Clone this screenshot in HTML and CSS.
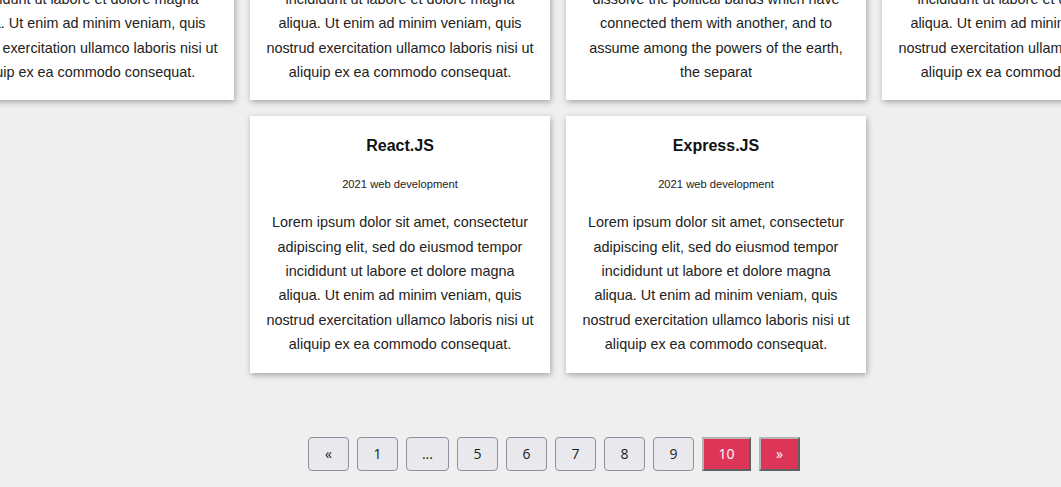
FILE: index.html
```html
<!DOCTYPE html>
<html lang="en">
<head>
<meta charset="utf-8">
<title>Projects</title>
<link rel="stylesheet" href="styles.css">
</head>
<body>
<main class="wrap">
  <section class="cards">
    <article class="card">
      <h3 class="card-title">HTML</h3>
      <p class="card-sub">2021 web development</p>
      <p class="card-text">Lorem ipsum dolor sit amet, consectetur adipiscing elit, sed do eiusmod tempor incididunt ut labore et dolore magna aliqua. Ut enim ad minim veniam, quis nostrud exercitation ullamco laboris nisi ut aliquip ex ea commodo consequat.</p>
    </article>
    <article class="card">
      <h3 class="card-title">CSS</h3>
      <p class="card-sub">2021 web development</p>
      <p class="card-text">Lorem ipsum dolor sit amet, consectetur adipiscing elit, sed do eiusmod tempor incididunt ut labore et dolore magna aliqua. Ut enim ad minim veniam, quis nostrud exercitation ullamco laboris nisi ut aliquip ex ea commodo consequat.</p>
    </article>
    <article class="card">
      <h3 class="card-title">JavaScript</h3>
      <p class="card-sub">2021 web development</p>
      <p class="card-text">When in the Course of human events, it becomes necessary for one people to dissolve the political bands which have connected them with another, and to assume among the powers of the earth, the separat</p>
    </article>
    <article class="card">
      <h3 class="card-title">Node.JS</h3>
      <p class="card-sub">2021 web development</p>
      <p class="card-text">Lorem ipsum dolor sit amet, consectetur adipiscing elit, sed do eiusmod tempor incididunt ut labore et dolore magna aliqua. Ut enim ad minim veniam, quis nostrud exercitation ullamco laboris nisi ut aliquip ex ea commodo consequat.</p>
    </article>
    <article class="card">
      <h3 class="card-title">React.JS</h3>
      <p class="card-sub">2021 web development</p>
      <p class="card-text">Lorem ipsum dolor sit amet, consectetur adipiscing elit, sed do eiusmod tempor incididunt ut labore et dolore magna aliqua. Ut enim ad minim veniam, quis nostrud exercitation ullamco laboris nisi ut aliquip ex ea commodo consequat.</p>
    </article>
    <article class="card">
      <h3 class="card-title">Express.JS</h3>
      <p class="card-sub">2021 web development</p>
      <p class="card-text">Lorem ipsum dolor sit amet, consectetur adipiscing elit, sed do eiusmod tempor incididunt ut labore et dolore magna aliqua. Ut enim ad minim veniam, quis nostrud exercitation ullamco laboris nisi ut aliquip ex ea commodo consequat.</p>
    </article>
  </section>
  <nav class="pager">
    <button class="pg pg-arrow">«</button>
    <button class="pg">1</button>
    <button class="pg pg-dots">...</button>
    <button class="pg">5</button>
    <button class="pg">6</button>
    <button class="pg">7</button>
    <button class="pg">8</button>
    <button class="pg">9</button>
    <button class="pg pg-active">10</button>
    <button class="pg pg-active pg-next">»</button>
  </nav>
</main>
</body>
</html>
```

FILE: styles.css
```css
html, body {
  margin: 0;
  padding: 0;
  overflow: hidden;
  background: #efefef;
}

body {
  font-family: "Liberation Sans", Arial, sans-serif;
  color: #222;
}

.wrap {
  width: 1248px;
  margin-left: -66px;
  margin-top: -156px;
}

.cards {
  display: flex;
  flex-wrap: wrap;
  justify-content: center;
  gap: 16px;
}

.card {
  box-sizing: border-box;
  width: 300px;
  background: #fff;
  padding: 21px 15px 16px;
  text-align: center;
  box-shadow: 1px 2px 6px rgba(0, 0, 0, 0.32);
}

.card-title {
  margin: 0;
  font-size: 16px;
  line-height: 18px;
  font-weight: bold;
  color: #111;
}

.card-sub {
  margin: 23px 0 0;
  font-size: 11.2px;
  line-height: 13px;
  color: #222;
}

.card-text {
  margin: 19px 0 0;
  font-size: 14.4px;
  line-height: 24.375px;
  color: #222;
}

.pager {
  display: flex;
  justify-content: center;
  gap: 8px;
  margin-top: 64px;
  padding-right: 8px;
}

.pg {
  box-sizing: border-box;
  height: 34px;
  padding: 0 15.5px;
  font-family: "Open Sans", sans-serif;
  font-size: 14px;
  color: #1b1b1b;
  background: #e9e9ed;
  border: 1px solid #8f8f9d;
  border-radius: 4px;
}

.pg-arrow {
  padding: 0 16px;
}

.pg-dots {
  padding: 0 15px;
}

.pg-active {
  background: #dc3558;
  color: #fff;
  border: 2px outset #b4b4b4;
  border-radius: 0;
  padding: 0 14.5px;
}

.pg-active.pg-next {
  padding: 0 15px;
}
```
